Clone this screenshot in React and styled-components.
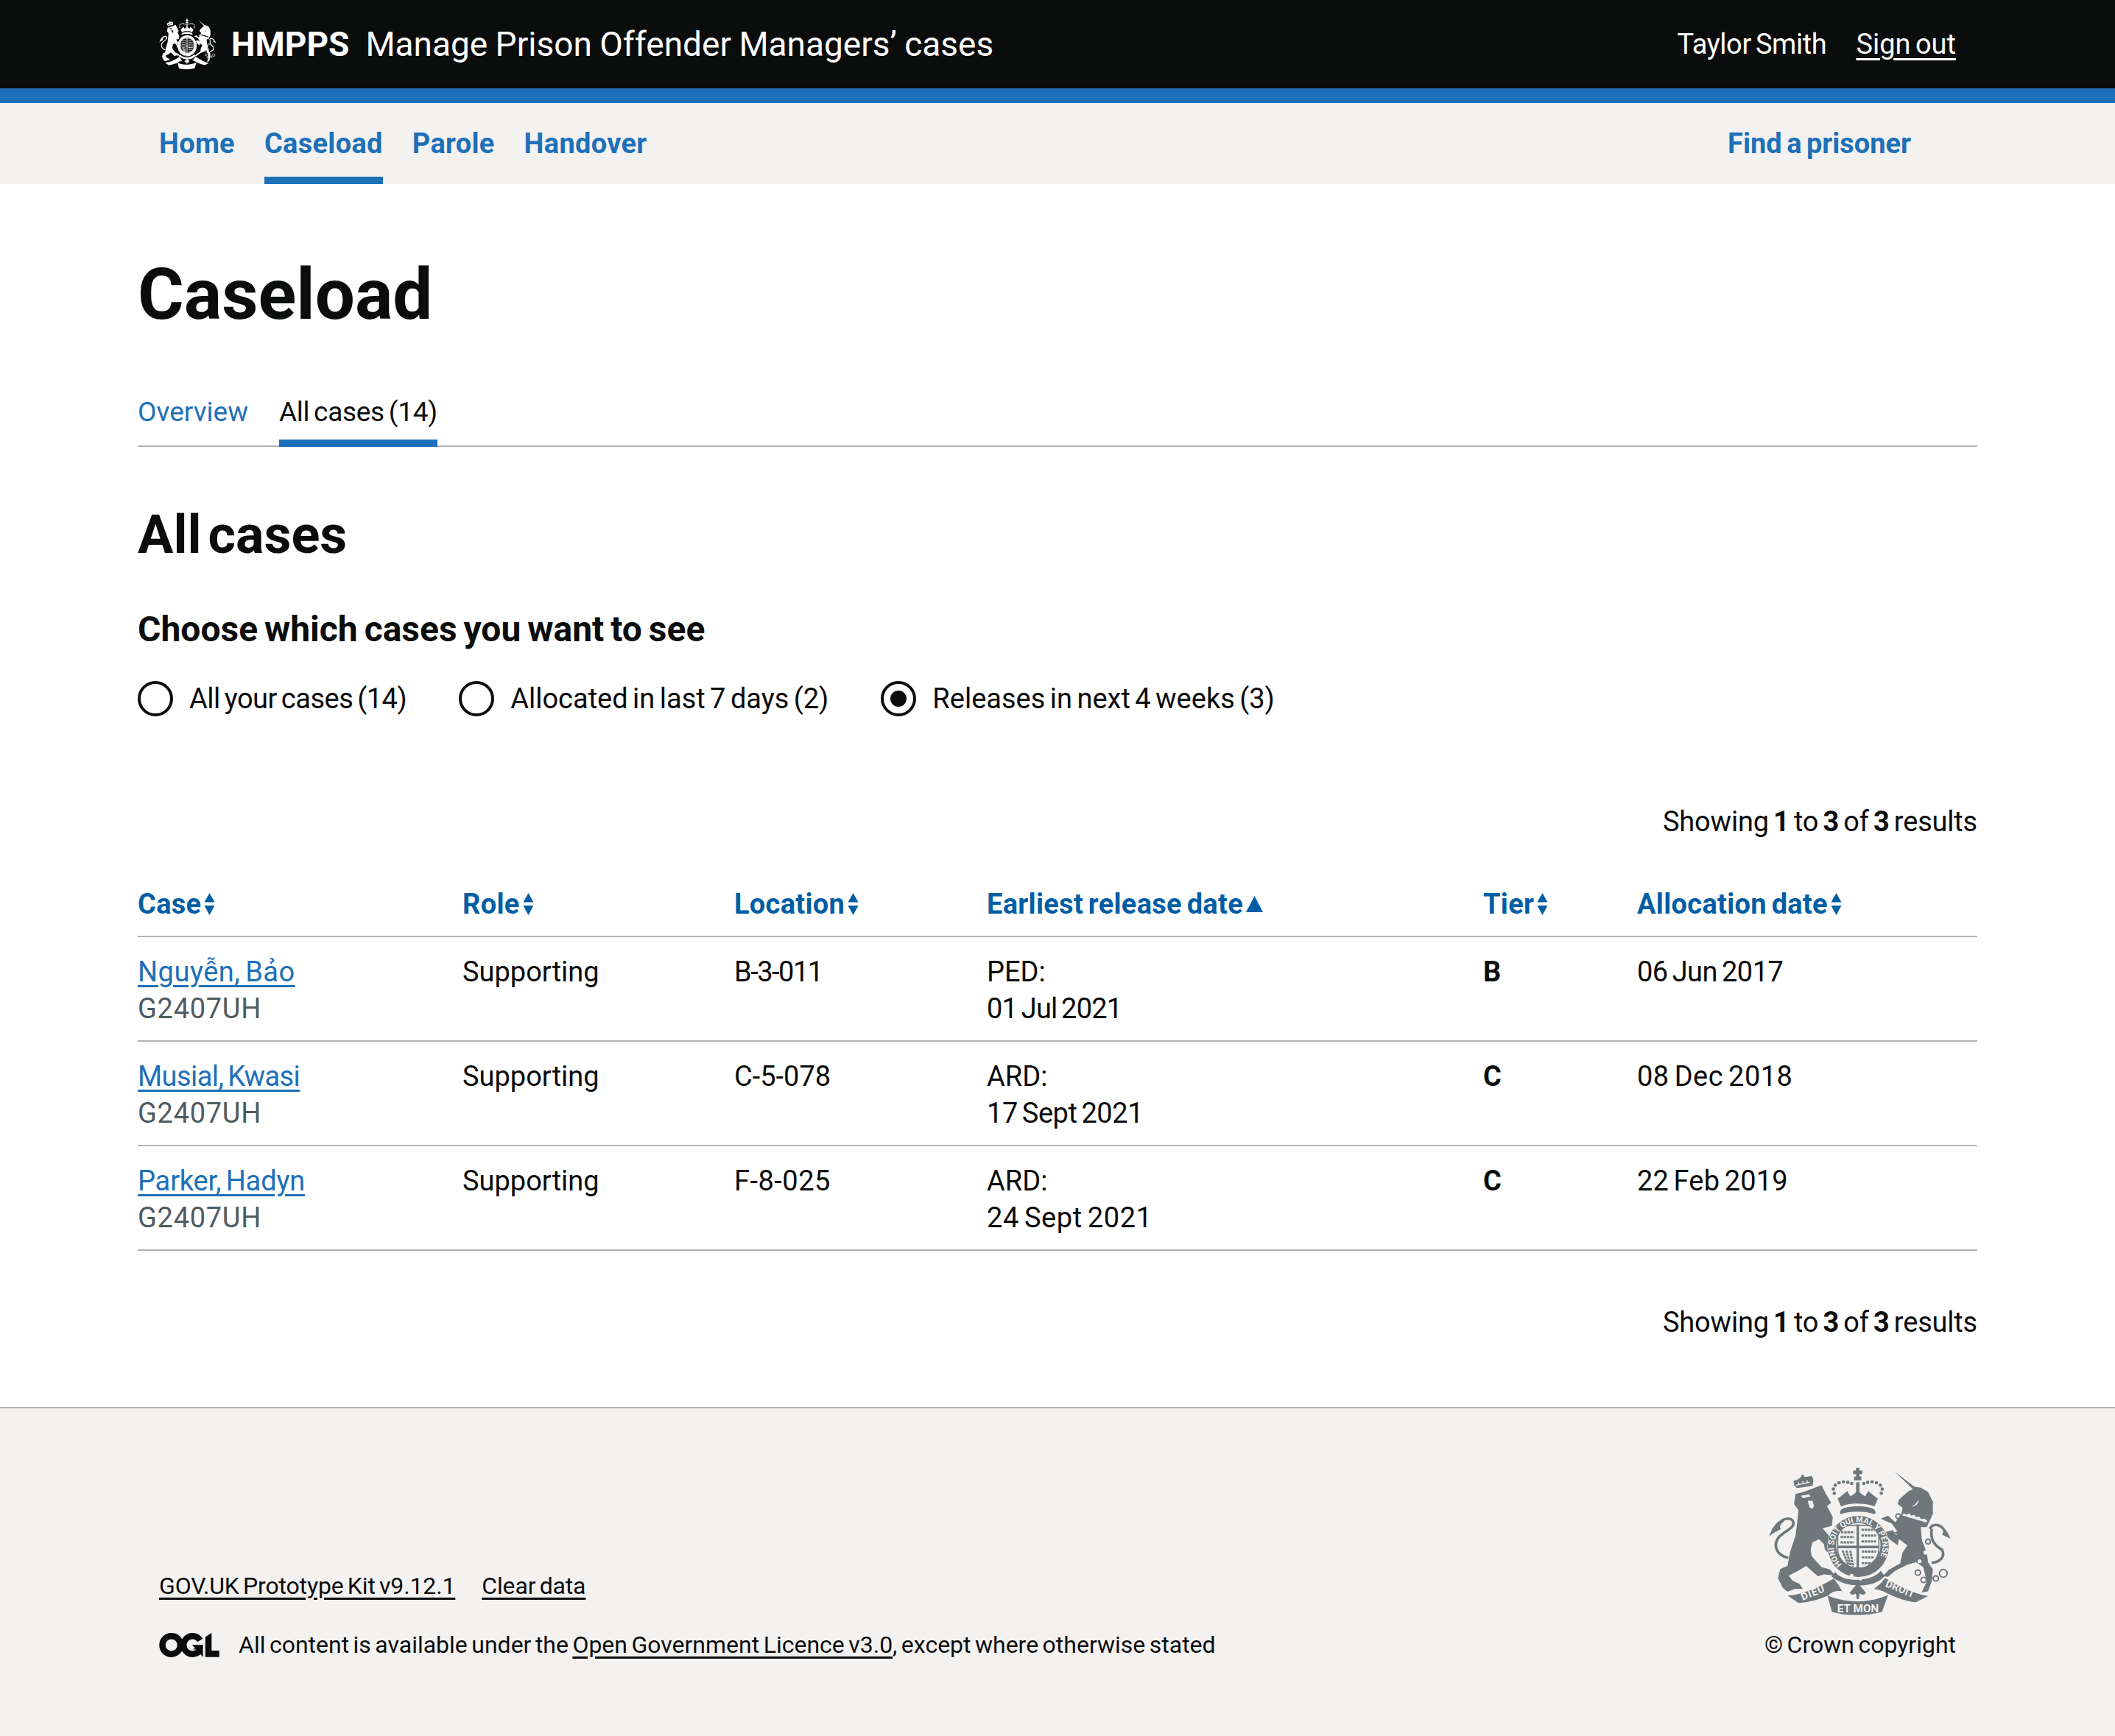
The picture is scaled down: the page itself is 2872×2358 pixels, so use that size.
import React from 'react';
import styled, { createGlobalStyle } from 'styled-components';

const FONT = 'Roboto, "Liberation Sans", Arial, sans-serif';

const GlobalStyle = createGlobalStyle`
    html, body {
        margin: 0;
        padding: 0;
        background: #ffffff;
    }
    body {
        font-family: ${FONT};
        color: #0b0c0c;
        word-spacing: -3px;
    }
`;

const Page = styled.div`
    width: 2872px;
    height: 2358px;
    display: flex;
    flex-direction: column;
    overflow: hidden;
`;

const Masthead = styled.header`
    height: 120px;
    flex: none;
    background: #0b0c0c;
    border-bottom: 20px solid #1d70b8;
    padding: 0 216px;
    display: flex;
    align-items: center;
    justify-content: space-between;
    color: #fff;
    font-size: 46px;
    word-spacing: -1px;
`;

const Brand = styled.div`
    display: flex;
    align-items: center;
`;

const BrandName = styled.span`
    font-weight: 700;
    margin-left: 20px;
    margin-right: 22px;
`;

const Account = styled.div`
    display: flex;
    align-items: center;
    gap: 40px;
    font-size: 38px;
    word-spacing: -3px;
    a {
        color: #fff;
        text-underline-offset: 6px;
    }
`;

const AccountName = styled.span`
    letter-spacing: -0.4px;
`;

const NavBar = styled.nav`
    height: 110px;
    flex: none;
    background: #f3f2f1;
    padding: 0 277px 0 216px;
    display: flex;
    justify-content: space-between;
`;

const NavGroup = styled.div`
    display: flex;
    gap: 40px;
`;

const NavLink = styled.a`
    display: flex;
    align-items: center;
    height: 110px;
    box-sizing: border-box;
    font-size: 38px;
    font-weight: 700;
    letter-spacing: ${p => p.$track ?? 0.3}px;
    color: #1d70b8;
    border-bottom: 10px solid ${p => (p.$active ? '#1d70b8' : 'transparent')};
    padding-top: 10px;
`;

const Main = styled.main`
    padding: 0 187px;
    flex: 1;
`;

const Title = styled.h1`
    margin: 0;
    padding-top: 98px;
    font-size: 96px;
    line-height: 104px;
    font-weight: 700;
`;

const Tabs = styled.div`
    display: flex;
    gap: 42px;
    margin-top: 83px;
    border-bottom: 2px solid #b1b4b6;
`;

const Tab = styled.a`
    font-size: 37px;
    line-height: 50px;
    letter-spacing: ${p => (p.$active ? -0.3 : 0)}px;
    padding: 0 0 12px;
    color: ${p => (p.$active ? '#0b0c0c' : '#1d70b8')};
    border-bottom: 10px solid ${p => (p.$active ? '#1d70b8' : 'transparent')};
    margin-bottom: -2px;
`;

const Heading = styled.h2`
    margin: 80px 0 0;
    font-size: 72px;
    line-height: 80px;
    font-weight: 700;
    word-spacing: -9px;
`;

const Legend = styled.h3`
    margin: 58px 0 0;
    font-size: 48px;
    line-height: 60px;
    font-weight: 700;
`;

const Radios = styled.div`
    display: flex;
    margin-top: 40px;
`;

const Radio = styled.label`
    display: flex;
    align-items: center;
    gap: 22px;
    margin-right: 71px;
    font-size: 38px;
    line-height: 48px;
    letter-spacing: ${p => p.$track || 0}px;
`;

const RadioMark = styled.span`
    width: 48px;
    height: 48px;
    box-sizing: border-box;
    border: 4px solid #0b0c0c;
    border-radius: 50%;
    display: flex;
    align-items: center;
    justify-content: center;
    &::after {
        content: '';
        display: ${p => (p.$checked ? 'block' : 'none')};
        width: 22px;
        height: 22px;
        border-radius: 50%;
        background: #0b0c0c;
    }
`;

const Results = styled.p`
    margin: ${p => p.$top}px 0 0;
    text-align: right;
    font-size: 38px;
    line-height: 50px;
    word-spacing: -3px;
    letter-spacing: -0.2px;
    b {
        font-weight: 700;
    }
`;

const Table = styled.table`
    width: 100%;
    margin-top: 62px;
    border-collapse: collapse;
    table-layout: fixed;
    font-size: 38px;
    line-height: 50px;
`;

const HeadCell = styled.th`
    width: ${p => p.$w}px;
    padding: 0 0 18px;
    text-align: left;
    font-weight: 700;
    letter-spacing: 0.3px;
    color: #005ea5;
    border-bottom: 2px solid #b1b4b6;
`;

const HeadInner = styled.span`
    display: inline-flex;
    align-items: center;
    gap: 4px;
`;

const Cell = styled.td`
    padding: 22px 0 18px;
    vertical-align: top;
    border-bottom: 2px solid #b1b4b6;
    font-weight: ${p => (p.$bold ? 700 : 400)};
`;

const CaseLink = styled.a`
    color: #1d70b8;
    text-decoration: underline;
    text-underline-offset: 5px;
    letter-spacing: ${p => p.$track}px;
`;

const Ref = styled.div`
    color: #505a5f;
    letter-spacing: 0.7px;
`;

const Figure = styled.span`
    letter-spacing: ${p => p.$track}px;
`;

const Footer = styled.footer`
    height: 447px;
    flex: none;
    box-sizing: border-box;
    background: #f3f2f1;
    border-top: 2px solid #b1b4b6;
    padding: 0 216px;
    display: flex;
    justify-content: space-between;
    align-items: flex-end;
    font-size: 32px;
    line-height: 40px;
    word-spacing: -2.5px;
    a {
        color: #0b0c0c;
        text-decoration: underline;
        text-underline-offset: 5px;
    }
`;

const FooterLeft = styled.div`
    padding-bottom: 104px;
`;

const FooterLinks = styled.div`
    display: flex;
    gap: 36px;
    margin-bottom: 40px;
    letter-spacing: -0.15px;
`;

const Licence = styled.div`
    display: flex;
    align-items: center;
    gap: 26px;
`;

const FooterRight = styled.div`
    display: flex;
    flex-direction: column;
    align-items: center;
    padding-bottom: 104px;
`;

const Copyright = styled.div`
    margin-top: 18px;
`;

function SortArrows({ up }) {
    if (up) {
        return (
            <svg width="23" height="30" viewBox="0 0 23 30" fill="#005ea5" aria-hidden="true">
                <path d="M0 26 11.5 4 23 26z" />
            </svg>
        );
    }
    return (
        <svg width="15" height="30" viewBox="0 0 15 30" fill="#005ea5" aria-hidden="true">
            <path d="M7.5 0 14.5 12.5H.5z" />
            <path d="M.5 17h14l-7 13z" />
        </svg>
    );
}

// royal arms, drawn over the same 960 grid as the footer crop
function Arms({ width, height, fg, bg, lettering }) {
    return (
        <svg width={width} height={height} viewBox="115 95 760 620" preserveAspectRatio="none" fill={fg} aria-hidden="true">
            {/* crown */}
            <path d="M478 100h14v12h12v14h-12v10h8v16h-30v-16h8v-10h-12v-14h12z" />
            <path d="M478 160h14v44h-14z" />
            {[[388, 205], [384, 188], [392, 172], [408, 162], [426, 158], [444, 160], [460, 165], [510, 165], [526, 160], [544, 158], [562, 162], [578, 172], [586, 188], [582, 205]].map(([x, y]) => (
                <circle key={x} cx={x} cy={y} r="7" />
            ))}
            <path d="M402 228l28-22 12-10 12 22 16-10 15-14 15 14 16 10 12-22 12 10 28 22-14 32c-40-16-104-16-138 0z" />
            <path d="M414 292c-6-14 4-24 20-27 32-8 72-8 102 0 16 3 26 13 20 27-42-14-100-14-142 0z" />

            {/* lion */}
            <path d="M228 208 262 200 335 172 352 205 375 245 358 258 372 285 382 305 378 340 340 350 392 410 395 445 370 455 350 440 345 415 325 395 298 408 290 440 295 465 335 510 370 520 392 545 345 540 320 548 272 505 240 525 200 545 215 565 245 580 258 600 225 600 195 612 175 595 155 555 165 518 195 505 205 450 228 380 235 325 240 275 222 250z" />
            <path d="M222 172l-2-18 18-6 12-10 8-12 8 12 16-2 14-2 6 18-4 22-36 6-28 4z" />
            <g fill={bg}>
                <path d="M250 216l34-6 6 8-30 8zM278 236h20l6 22-6 12-12-6-4-14z" />
                <path d="M230 170l26-6 30-6v4l-56 12zM238 160h4v8h-4zM256 156h4v8h-4zM274 152h4v8h-4z" />
            </g>
            <path d="M198 472C150 462 132 420 160 385 188 358 232 345 216 318 204 304 186 310 170 318" fill="none" stroke={fg} strokeWidth="11" />
            <path d="M176 312C146 322 126 356 120 386 134 366 152 366 168 352 158 350 166 330 180 322z" />

            {/* unicorn */}
            <path d="M636 115 718 178 745 182 775 200 795 240 795 290 770 345 745 345 750 400 770 450 775 490 795 520 790 570 775 610 748 615 770 570 755 510 725 490 690 500 640 525 610 550 588 548 612 522 660 495 670 450 690 420 655 395 650 420 615 395 600 365 630 358 645 380 650 365 625 330 600 320 580 310 610 298 640 325 665 290 670 265 650 250 655 232 690 200 712 188z" />
            <g fill={bg}>
                <path d="M676 288l10 6 12-6 8 10 12-4 8 10 12-2 8 10 12-2 14 8-4 8-100-30z" />
                <circle cx="765" cy="450" r="9" />
                <circle cx="740" cy="486" r="8" />
                <path d="M735 232c4 16-14 28-26 30 10-8 20-16 26-30z" />
            </g>
            <path d="M782 352C796 326 832 332 846 366M790 352C784 396 800 420 832 438 850 470 820 490 790 492" fill="none" stroke={fg} strokeWidth="11" />
            <path d="M840 350C854 360 862 376 868 394 856 384 846 384 834 376z" />
            <g fill="none" stroke={fg} strokeWidth="6">
                <circle cx="652" cy="300" r="10" />
                <circle cx="775" cy="405" r="10" />
                <circle cx="733" cy="533" r="11" />
                <circle cx="757" cy="563" r="11" />
                <circle cx="807" cy="557" r="11" />
                <circle cx="838" cy="536" r="16" />
                <path d="M608 380l38-14 8 26-24 8z" />
            </g>

            {/* garter and shield */}
            <circle cx="487" cy="425" r="128" fill={bg} />
            <circle cx="487" cy="425" r="126" />
            <circle cx="487" cy="420" r="92" fill={bg} />
            <path d="M402 352c26-20 144-20 170 0v84c0 48-52 78-85 92-33-14-85-44-85-92z" fill="none" stroke={fg} strokeWidth="5" />
            <path d="M480 334h10v190h-10zM404 422h166v10H404z" />
            <g fill="none" stroke={fg} strokeWidth="9" strokeDasharray="10 3">
                <path d="M416 366h54M414 386h56M414 408h56" />
                <path d="M500 356h56M500 380h60M500 404h60" />
                <path d="M502 446h58M502 470h50M502 494h36" />
                <path d="M422 442l24 58M438 442l18 62M454 442l12 66" />
            </g>
            <path d="M392 530c30 44 150 44 188-4l16 20c-40 54-168 52-220 2z" />
            <circle cx="460" cy="546" r="8" fill={bg} />
            <circle cx="496" cy="558" r="7" fill={bg} />
            {/* fleur-de-lis */}
            <path d="M485 578c14 12 24 26 34 38-10 12-22 8-26 2l-4 24h-8l-4-24c-4 6-16 10-26-2 10-12 20-26 34-38z" />

            {/* motto ribbons */}
            <path d="M195 628C260 625 330 590 385 558 400 575 410 590 420 610 395 605 375 615 365 625 340 640 285 655 240 658z" />
            <path d="M552 600C565 590 585 575 598 555 650 585 710 620 775 630L725 655C670 650 620 625 590 610 575 605 560 600 552 600z" />
            <path d="M360 628C440 660 530 660 610 625L585 695C520 712 440 712 378 695z" />
            {lettering && (
                <>
                    <g fill={bg} fontFamily={FONT} fontWeight="700" fontSize="42" wordSpacing="0">
                        <text x="400" y="698" textLength="172" lengthAdjust="spacingAndGlyphs">ET MON</text>
                        <text transform="translate(258 648) rotate(-22)" letterSpacing="3">DIEU</text>
                        <text transform="translate(597 590) rotate(22)" letterSpacing="1">DROIT</text>
                    </g>
                    <path id="garter-line" fill="none" d="M423 502a100 100 0 1 1 128 0" />
                    <text fill={bg} fontFamily={FONT} fontWeight="700" fontSize="33" wordSpacing="0">
                        <textPath href="#garter-line" startOffset="1%">HONI SOIT QUI MAL Y PENSE</textPath>
                    </text>
                </>
            )}
        </svg>
    );
}

const OglLogo = () => (
    <svg width="82" height="33" viewBox="0 0 483.2 195.7" fill="#0b0c0c" aria-hidden="true">
        <path d="M421.5 142.8V.1l-50.7 32.3v161.1h112.4v-50.7zm-122.3-9.6A47.12 47.12 0 0 1 221 97.8c0-26 21.1-47.1 47.1-47.1 16.7 0 31.4 8.7 39.7 21.8l42.7-27.2A97.63 97.63 0 0 0 268.1 0c-36.5 0-68.3 20.1-85.1 49.7A98 98 0 0 0 97.8 0C43.9 0 0 43.9 0 97.8s43.9 97.8 97.8 97.8c36.5 0 68.3-20.1 85.1-49.7a97.76 97.76 0 0 0 149.6 25.4l19.4 22.4v-97.8h-87.6l24.1 27.8c-9.1 6.3-19.6 10.2-29.2 8.5zM97.8 145c-26 0-47.1-21.1-47.1-47.1s21.1-47.1 47.1-47.1 47.2 21 47.2 47S123.8 145 97.8 145" />
    </svg>
);

const columns = [
    { label: 'Case', w: 441 },
    { label: 'Role', w: 369 },
    { label: 'Location', w: 343 },
    { label: 'Earliest release date', w: 674, sorted: true },
    { label: 'Tier', w: 209 },
    { label: 'Allocation date', w: 462 },
];

const cases = [
    { name: 'Nguyễn, Bảo', nameTrack: 0.5, loc: 'B-3-011', locTrack: -1.5, kind: 'PED:', date: '01 Jul 2021', dateTrack: -0.8, tier: 'B', alloc: '06 Jun 2017', allocTrack: -0.5 },
    { name: 'Musial, Kwasi', nameTrack: -0.56, loc: 'C-5-078', locTrack: 0, kind: 'ARD:', date: '17 Sept 2021', dateTrack: -0.45, tier: 'C', alloc: '08 Dec 2018', allocTrack: 0.5 },
    { name: 'Parker, Hadyn', nameTrack: -0.15, loc: 'F-8-025', locTrack: 0.5, kind: 'ARD:', date: '24 Sept 2021', dateTrack: 0.6, tier: 'C', alloc: '22 Feb 2019', allocTrack: 0.15 },
];

const ResultCount = ({ top }) => (
    <Results $top={top}>
        Showing <b>1</b> to <b>3</b> of <b>3</b> results
    </Results>
);

export default function App() {
    return (
        <Page>
            <GlobalStyle />
            <Masthead>
                <Brand>
                    <Arms width="78" height="70" fg="#ffffff" bg="#0b0c0c" />
                    <BrandName>HMPPS</BrandName>
                    <span>Manage Prison Offender Managers’ cases</span>
                </Brand>
                <Account>
                    <AccountName>Taylor Smith</AccountName>
                    <a href="#signout">Sign out</a>
                </Account>
            </Masthead>
            <NavBar>
                <NavGroup>
                    <NavLink>Home</NavLink>
                    <NavLink $active>Caseload</NavLink>
                    <NavLink>Parole</NavLink>
                    <NavLink>Handover</NavLink>
                </NavGroup>
                <NavLink $track={0}>Find a prisoner</NavLink>
            </NavBar>
            <Main>
                <Title>Caseload</Title>
                <Tabs>
                    <Tab>Overview</Tab>
                    <Tab $active>All cases (14)</Tab>
                </Tabs>
                <Heading>All cases</Heading>
                <Legend>Choose which cases you want to see</Legend>
                <Radios>
                    <Radio $track={-0.5}><RadioMark />All your cases (14)</Radio>
                    <Radio><RadioMark />Allocated in last 7 days (2)</Radio>
                    <Radio><RadioMark $checked />Releases in next 4 weeks (3)</Radio>
                </Radios>
                <ResultCount top={118} />
                <Table>
                    <thead>
                        <tr>
                            {columns.map(col => (
                                <HeadCell key={col.label} $w={col.w}>
                                    <HeadInner>{col.label}<SortArrows up={col.sorted} /></HeadInner>
                                </HeadCell>
                            ))}
                        </tr>
                    </thead>
                    <tbody>
                        {cases.map(c => (
                            <tr key={c.name}>
                                <Cell>
                                    <CaseLink href="#case" $track={c.nameTrack}>{c.name}</CaseLink>
                                    <Ref>G2407UH</Ref>
                                </Cell>
                                <Cell>Supporting</Cell>
                                <Cell><Figure $track={c.locTrack}>{c.loc}</Figure></Cell>
                                <Cell>{c.kind}<br /><Figure $track={c.dateTrack}>{c.date}</Figure></Cell>
                                <Cell $bold>{c.tier}</Cell>
                                <Cell><Figure $track={c.allocTrack}>{c.alloc}</Figure></Cell>
                            </tr>
                        ))}
                    </tbody>
                </Table>
                <ResultCount top={72} />
            </Main>
            <Footer>
                <FooterLeft>
                    <FooterLinks>
                        <a href="#kit">GOV.UK Prototype Kit v9.12.1</a>
                        <a href="#clear">Clear data</a>
                    </FooterLinks>
                    <Licence>
                        <OglLogo />
                        <span>All content is available under the <a href="#ogl">Open Government Licence v3.0</a>, except where otherwise stated</span>
                    </Licence>
                </FooterLeft>
                <FooterRight>
                    <Arms width="250" height="204" fg="#6f777b" bg="#f3f2f1" lettering />
                    <Copyright>© Crown copyright</Copyright>
                </FooterRight>
            </Footer>
        </Page>
    );
}
